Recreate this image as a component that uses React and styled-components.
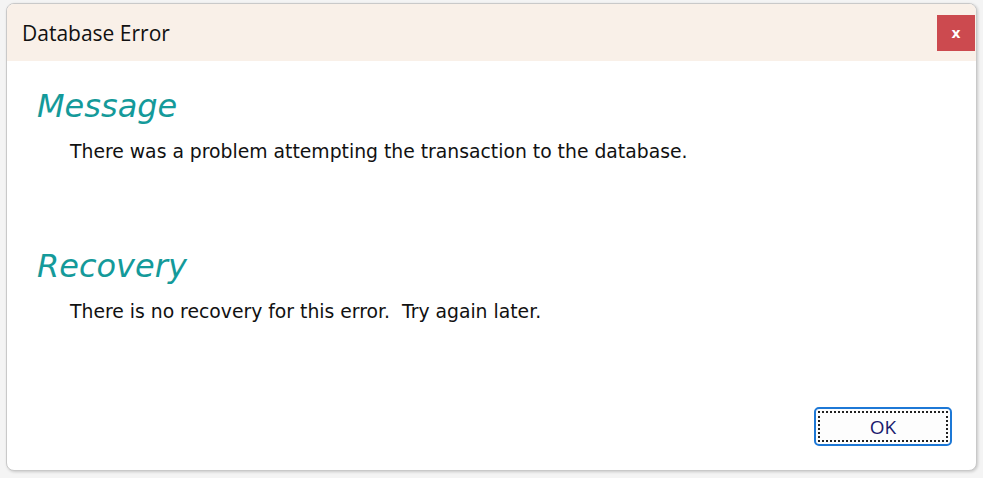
import styled, { createGlobalStyle } from "styled-components";

const GlobalStyle = createGlobalStyle`
  html, body {
    margin: 0;
    padding: 0;
    background: #f4f4f4;
  }
`;

const Page = styled.div`
  width: 983px;
  height: 478px;
  padding: 3px 6px 7px 6px;
  box-sizing: border-box;
`;

const Window = styled.div`
  height: 100%;
  display: flex;
  flex-direction: column;
  background: #ffffff;
  border: 1px solid #c9c9c9;
  border-radius: 8px;
  overflow: hidden;
  box-shadow: 1px 1px 3px rgba(0, 0, 0, 0.18);
  box-sizing: border-box;
`;

const TitleBar = styled.div`
  height: 57px;
  flex: none;
  display: flex;
  align-items: center;
  justify-content: space-between;
  padding: 0 1px 0 15px;
  background: #f9f0e8;
`;

const Title = styled.span`
  font-family: "Open Sans", "Noto Sans", sans-serif;
  font-size: 21px;
  color: #111;
`;

const CloseButton = styled.button`
  width: 38px;
  height: 36px;
  border: none;
  background: #cc4a4f;
  color: #fff;
  font-family: "DejaVu Sans", sans-serif;
  font-weight: bold;
  font-size: 14px;
  padding: 0;
  display: flex;
  align-items: center;
  justify-content: center;
`;

const Content = styled.div`
  flex: 1;
  display: flex;
  flex-direction: column;
  padding: 27px 24px 24px 30px;
`;

const Section = styled.div`
  display: flex;
  flex-direction: column;
  height: ${(p) => p.$height}px;
`;

const Heading = styled.h2`
  margin: 0;
  font-family: "DejaVu Sans", Verdana, sans-serif;
  font-style: italic;
  font-weight: normal;
  font-size: 32px;
  line-height: 36px;
  color: #149a9a;
`;

const Text = styled.p`
  margin: 16px 0 0 33px;
  font-family: "DejaVu Sans", Tahoma, sans-serif;
  font-size: 18.8px;
  line-height: 24px;
  color: #111;
  white-space: pre;
`;

const Footer = styled.div`
  margin-top: auto;
  display: flex;
  justify-content: flex-end;
`;

const OkButton = styled.button`
  position: relative;
  width: 138px;
  height: 39px;
  background: #fdfdfd;
  border: 2px solid #1d78d6;
  border-radius: 5px;
  font-family: "Open Sans", "Noto Sans", sans-serif;
  font-size: 19px;
  color: #1a1a6e;
  padding: 0;

  &::after {
    content: "";
    position: absolute;
    inset: 2px;
    border: 2px dotted #222;
  }
`;

export default function App() {
  return (
    <>
      <GlobalStyle />
      <Page>
        <Window>
          <TitleBar>
            <Title>Database Error</Title>
            <CloseButton>x</CloseButton>
          </TitleBar>
          <Content>
            <Section $height={160}>
              <Heading>Message</Heading>
              <Text>There was a problem attempting the transaction to the database.</Text>
            </Section>
            <Section>
              <Heading>Recovery</Heading>
              <Text>{"There is no recovery for this error.  Try again later."}</Text>
            </Section>
            <Footer>
              <OkButton>OK</OkButton>
            </Footer>
          </Content>
        </Window>
      </Page>
    </>
  );
}
